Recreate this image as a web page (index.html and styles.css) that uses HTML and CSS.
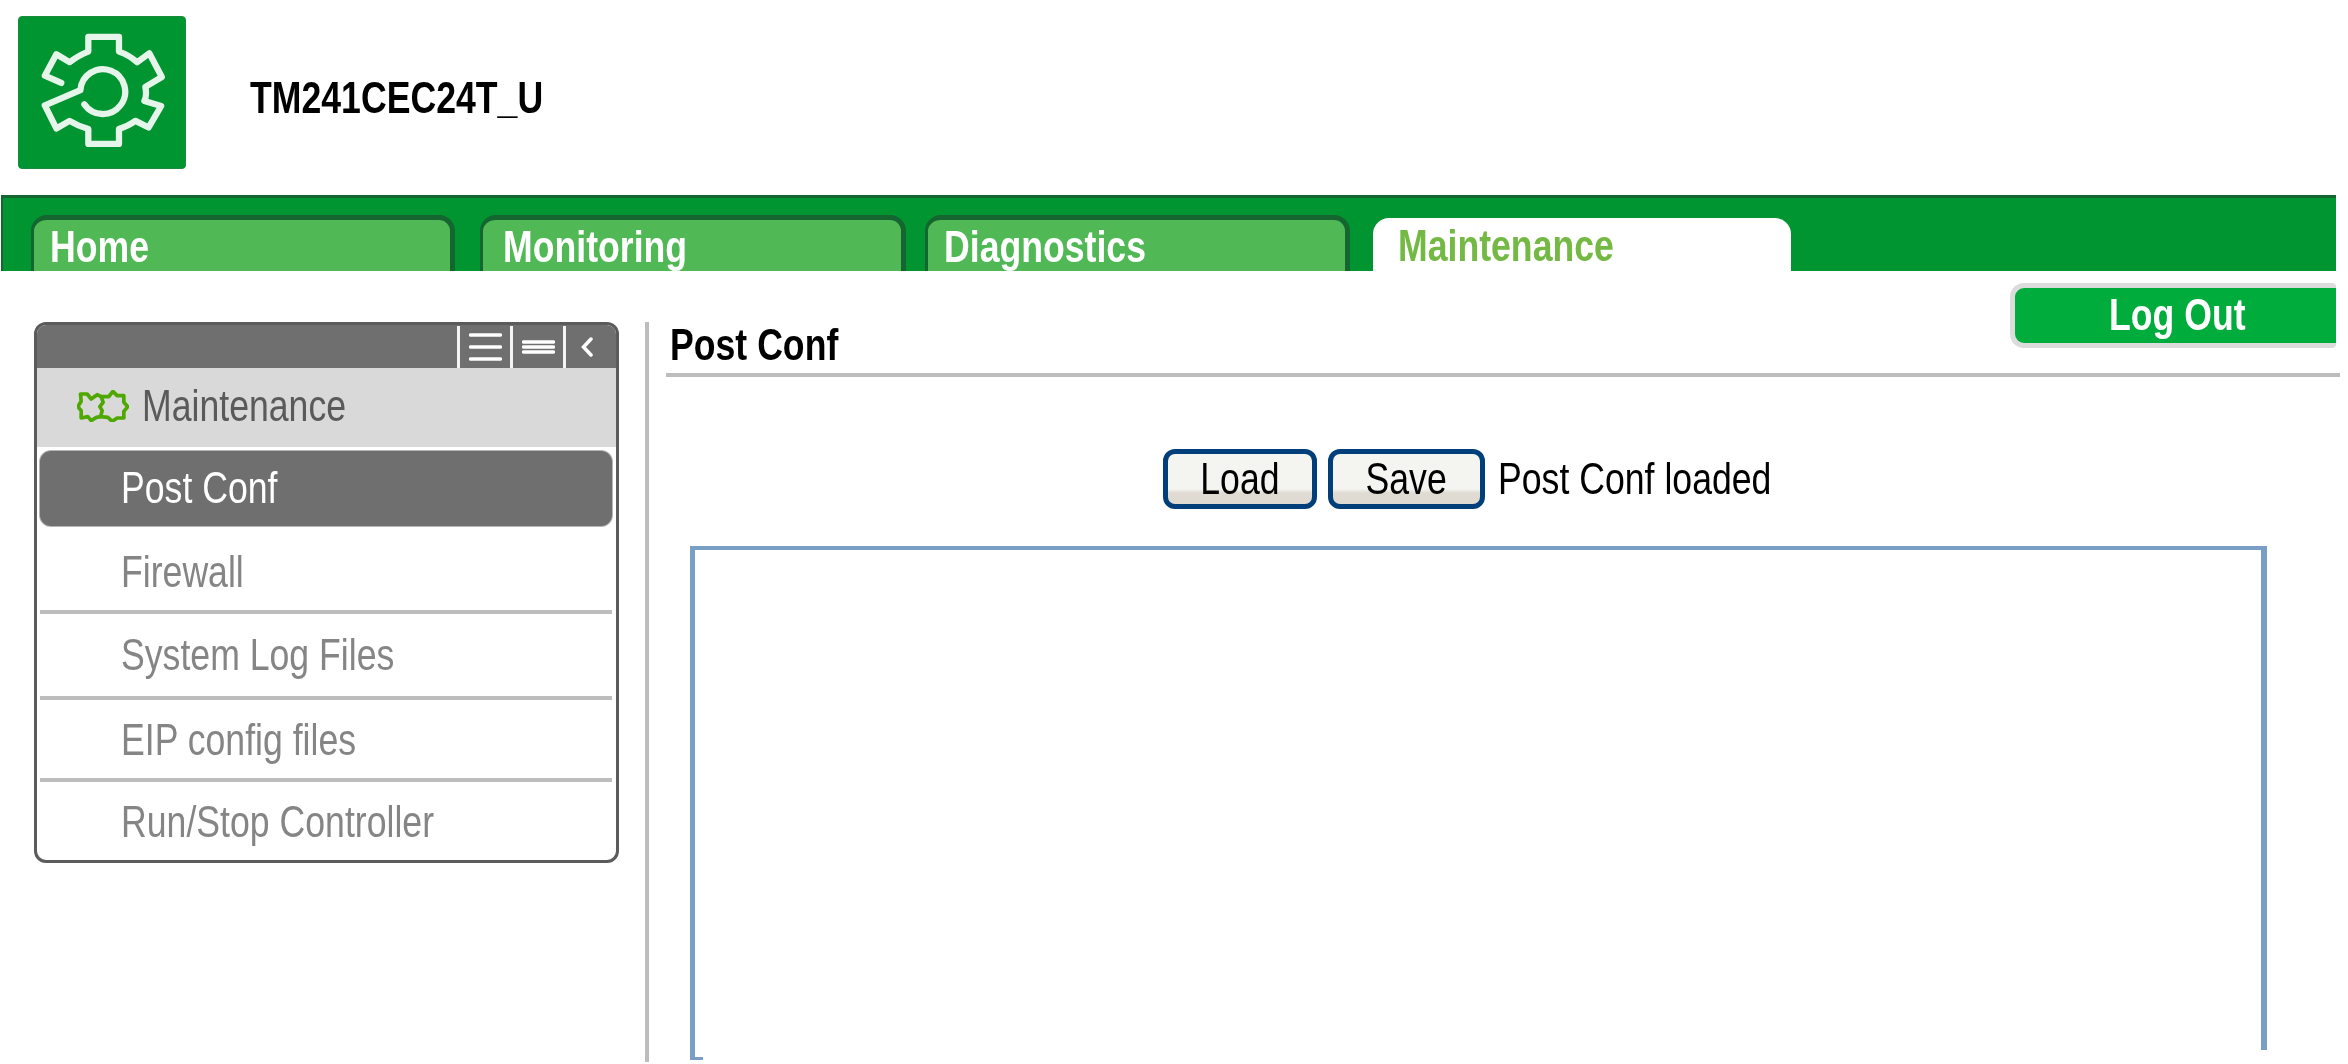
FILE: index.html
```html
<!DOCTYPE html>
<html lang="en">
<head>
<meta charset="utf-8">
<title>TM241CEC24T_U</title>
<link rel="stylesheet" href="styles.css">
</head>
<body>
<div class="app">
  <header class="header">
    <div class="logo">
      <svg class="logo-gear" viewBox="52 50 503 458" aria-hidden="true">
        <path d="M180 250L130 228L165 163L205 187Q235 165 262 155L262 110L355 110L355 155Q385 165 410 187L447 160L485 232L435 262Q440 290 432 305L483 320L445 385L405 365Q385 380 355 390L355 435L262 435L262 390Q230 380 205 365L165 388L130 318L238 272A68 68 0 1 1 250 315"/>
      </svg>
    </div>
    <h1 class="device"><span class="tx">TM241CEC24T_U</span></h1>
  </header>
  <nav class="nav">
    <a class="tab tab-home"><span class="tx">Home</span></a>
    <a class="tab tab-monitoring"><span class="tx">Monitoring</span></a>
    <a class="tab tab-diagnostics"><span class="tx">Diagnostics</span></a>
    <a class="tab tab-maintenance"><span class="tx">Maintenance</span></a>
  </nav>
  <main class="main">
    <aside class="panel">
      <div class="panel-bar">
        <button class="bar-btn">
          <svg class="bar-icon-a" viewBox="0 0 33 28" aria-hidden="true"><path d="M1.5 2H31.5M1.5 14H31.5M1.5 26H31.5"/></svg>
        </button>
        <button class="bar-btn">
          <svg class="bar-icon-b" viewBox="0 0 33 14" aria-hidden="true"><path d="M1.5 2H31.5M1.5 7H31.5M1.5 12H31.5"/></svg>
        </button>
        <button class="bar-btn bar-btn-last">
          <svg class="bar-icon-c" viewBox="0 0 12 20" aria-hidden="true"><path d="M10 2L2.5 10L10 18"/></svg>
        </button>
      </div>
      <div class="section">
        <svg class="section-icon" viewBox="50 28 155 96" aria-hidden="true">
          <path d="M122 48L145 48L157 32L170 45L190 45L190 65L202 78L190 92L190 112L170 112L155 122L142 110L120 108L125 90L118 78L128 65Z"/>
          <path d="M122 48L110 42L92 55L80 40L60 40L62 62L52 78L62 90L62 112L82 108L92 120L108 110L120 108"/>
        </svg>
        <span class="tx">Maintenance</span>
      </div>
      <ul class="menu">
        <li class="menu-active"><span class="tx">Post Conf</span></li>
        <li class="menu-item menu-firewall"><span class="tx">Firewall</span></li>
        <li class="menu-item menu-logs"><span class="tx">System Log Files</span></li>
        <li class="menu-item menu-eip"><span class="tx">EIP config files</span></li>
        <li class="menu-item menu-run"><span class="tx">Run/Stop Controller</span></li>
      </ul>
    </aside>
    <section class="content">
      <h2 class="title"><span class="tx">Post Conf</span></h2>
      <div class="actions">
        <button class="btn btn-load"><span class="tx tx-c">Load</span></button>
        <button class="btn btn-save"><span class="tx tx-c">Save</span></button>
        <span class="status"><span class="tx">Post Conf loaded</span></span>
      </div>
      <div class="editor"></div>
    </section>
    <button class="logout"><span class="tx tx-c">Log Out</span></button>
  </main>
</div>
</body>
</html>
```
FILE: styles.css
```css
* { box-sizing: border-box; }
html, body { margin: 0; height: 100%; background: #fff; overflow: hidden; }
body { font-family: "Liberation Sans", Arial, sans-serif; font-size: 44px; line-height: 40px; }
button { font: inherit; padding: 0; margin: 0; }
.app { width: 2348px; height: 1064px; display: flex; flex-direction: column; }
.tx { display: inline-block; white-space: nowrap; transform: scaleX(.81); transform-origin: 0 50%; }
.tx-c { transform-origin: 50% 50%; }

/* header */
.header { height: 195px; display: flex; align-items: flex-start; padding: 16px 0 0 18px; }
.logo { width: 168px; height: 153px; background: #009530; border: 1px solid #1a8a3c; border-radius: 4px; overflow: hidden; }
.logo-gear { display: block; width: 100%; height: 100%; fill: none; stroke: #e6f5ea; stroke-width: 19; stroke-linejoin: round; stroke-linecap: round; filter: blur(.6px); }
.device { margin: 62px 0 0 64px; font-size: inherit; font-weight: 700; line-height: 40px; color: #000; }

/* tabs */
.nav { margin-left: 1px; width: 2335px; height: 76px; display: flex; align-items: flex-end; background: #009530; border-top: 3px solid #14652f; border-left: 2px solid #14652f; }
.tab { height: 56px; color: #fff; font-weight: 700; line-height: 40px; background: #50b955; border: solid #14652f; border-width: 5px 5px 0 3px; border-radius: 16px 16px 0 0; padding: 7px 0 0 16px; }
.tab-home { width: 424px; margin-left: 28px; }
.tab-monitoring { width: 426px; margin-left: 25px; padding-left: 20px; }
.tab-diagnostics { width: 425px; margin-left: 19px; padding-left: 16px; }
.tab-maintenance { width: 418px; height: 53px; margin-left: 23px; padding: 8px 0 0 25px; background: #fff; color: #74b944; border: 0; }

/* layout */
.main { position: relative; flex: 1; display: flex; align-items: flex-start; padding: 51px 0 0 34px; }

/* side panel */
.panel { width: 585px; height: 541px; flex: none; border: 3px solid #5b5b5b; border-radius: 12px; overflow: hidden; background: #fff; }
.panel-bar { height: 43px; background: #6f6f6f; display: flex; justify-content: flex-end; padding-top: 1px; }
.bar-btn { width: 53px; height: 42px; background: none; border: 0; border-left: 3px solid #f4f4f4; display: flex; align-items: center; justify-content: center; }
.bar-btn-last { justify-content: flex-start; padding-left: 15px; }
.bar-btn svg { display: block; fill: none; stroke: #fff; stroke-linecap: round; }
.bar-icon-a { width: 33px; height: 28px; stroke-width: 3.5; }
.bar-icon-b { width: 33px; height: 14px; stroke-width: 3.5; }
.bar-icon-c { width: 12px; height: 20px; stroke-width: 3.5; }
.section { height: 79px; background: #d9d9d9; color: #5a5a5a; display: flex; align-items: center; padding: 0 0 3px 40px; }
.section-icon { width: 52px; height: 32px; margin-right: 13px; flex: none; fill: none; stroke: #4fa800; stroke-width: 11; stroke-linejoin: round; stroke-linecap: round; }
.menu { list-style: none; margin: 4px 4px 0 3px; padding: 0; }
.menu-active { height: 75px; line-height: 73px; background: #6f6f6f; color: #fff; border-radius: 11px; padding-left: 81px; box-shadow: 0 0 0 1px #b5b5b5; }
.menu-item { color: #858585; padding-left: 81px; border-bottom: 4px solid #bdbdbd; }
.menu-firewall { padding-top: 26px; padding-bottom: 18px; }
.menu-logs { padding-top: 21px; padding-bottom: 21px; }
.menu-eip { padding-top: 20px; padding-bottom: 18px; }
.menu-run { padding-top: 20px; padding-bottom: 18px; border-bottom: 0; }

/* content */
.content { margin-left: 26px; width: 1695px; height: 740px; flex: none; border-left: 4px solid #bdbdbd; padding-left: 17px; overflow: hidden; }
.title { margin: 0; height: 55px; border-bottom: 4px solid #bdbdbd; width: 1674px; font-size: inherit; font-weight: 700; line-height: 40px; color: #000; padding: 3px 0 0 4px; }
.actions { display: flex; align-items: center; margin-top: 72px; padding-left: 497px; color: #000; }
.btn { height: 60px; border: 5px solid #003f7a; border-radius: 12px; background: linear-gradient(#f4f4f0 0, #f4f4f0 70%, #e0dbd2 78%, #e0dbd2 100%); color: #000; display: flex; align-items: center; justify-content: center; }
.btn-load { width: 154px; }
.btn-save { width: 157px; margin-left: 11px; }
.status { margin-left: 13px; }
.editor { position: relative; margin: 37px 0 0 24px; width: 1577px; height: 514px; border-top: 4px solid #7a9fc5; border-left: 5px solid #7a9fc5; }
.editor::after { content: ""; position: absolute; top: -4px; right: 0; width: 6px; height: 504px; background: #7a9fc5; }
.editor::before { content: ""; position: absolute; left: 0; bottom: 0; width: 8px; height: 3px; background: #7a9fc5; }

/* logout */
.logout { position: absolute; top: 12px; left: 2010px; width: 326px; height: 65px; border: 5px solid #dcdcdc; border-right: 0; border-radius: 14px 4px 4px 14px; background: #00ac3c; color: #fff; font-weight: 700; display: flex; align-items: center; justify-content: center; padding: 0 0 2px 4px; }
```
